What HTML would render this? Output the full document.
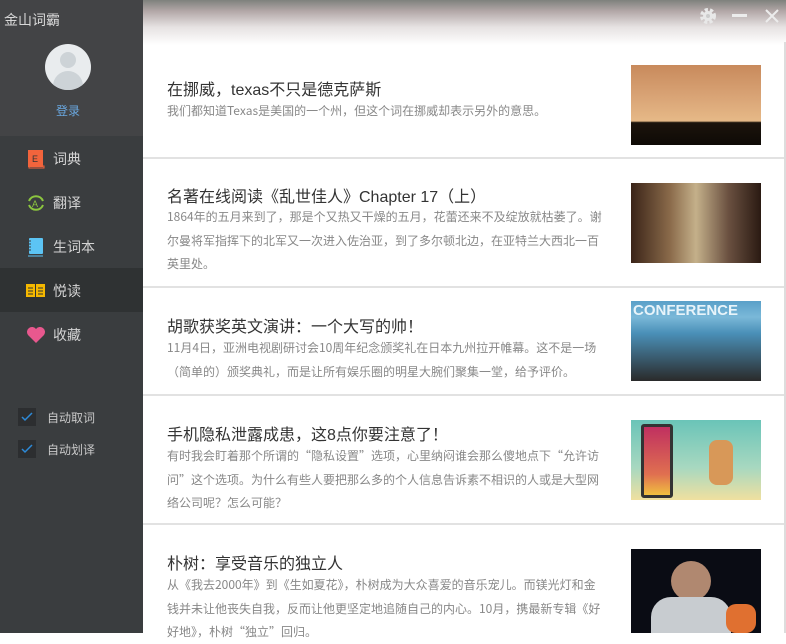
<!DOCTYPE html>
<html><head><meta charset="utf-8">
<style>
*{margin:0;padding:0;box-sizing:border-box}
body{width:786px;height:633px;overflow:hidden;background:#fff;font-family:"Liberation Sans","Noto Sans CJK SC",sans-serif;position:relative}
#side{position:absolute;left:0;top:0;width:143px;height:633px;background:#3a3d3f}
#sidetop{position:absolute;left:0;top:0;width:143px;height:136px;background:#434446}
.logo{position:absolute;left:4px;top:10px;color:#d8d8d8;font-size:14px}
.avatar{position:absolute;left:45px;top:44px;width:46px;height:46px;border-radius:50%;background:#e9ecee;overflow:hidden}
.login{position:absolute;left:56px;top:102px;color:#6aa8e0;font-size:12px}
.menu{position:absolute;left:0;width:143px;height:44px;color:#d4d4d4;font-size:14px}
.menu span{position:absolute;left:53px;top:13px}
.menu svg{position:absolute;left:26px;top:13px}
.active{background:#2f3233}
.chk{position:absolute;left:18px;width:18px;height:18px;background:#2c2e30}
.chk svg{position:absolute;left:3px;top:4px}
.chklbl{position:absolute;left:47px;color:#c8c8c8;font-size:12px}
#topbar{position:absolute;left:143px;top:0;width:643px;height:45px;background:linear-gradient(#7e817c 0%,#b3a8a8 25%,#e6e2e2 60%,#fff 100%)}
#rb{position:absolute;left:784px;top:42px;width:2px;height:591px;background:#ddd}
.item{position:absolute;left:143px;width:641px}
.t{position:absolute;left:24px;font-size:16px;color:#333}
.d{position:absolute;left:24px;width:436px;font-size:12px;color:#888;line-height:23.5px;font-family:"Noto Sans CJK SC","Liberation Sans",sans-serif}
.img{position:absolute;left:488px;width:130px;height:80px}
.hr{position:absolute;left:143px;width:641px;height:2px;background:#e2e2e2}
</style></head><body>
<div id="side">
<div id="sidetop"></div>
<div class="logo">金山词霸</div>
<div class="avatar"><div style="position:absolute;left:15px;top:8px;width:16px;height:16px;border-radius:50%;background:#cdd3d7"></div><div style="position:absolute;left:8px;top:27px;width:30px;height:24px;border-radius:15px 15px 0 0;background:#cdd3d7"></div></div>
<div class="login">登录</div>
<div class="menu" style="top:136px"><svg width="20" height="20"><rect x="2" y="1" width="15" height="17" fill="#f2643c"/><rect x="3" y="17" width="15" height="2" fill="none" stroke="#f2643c"/><text x="6" y="13" font-size="9" fill="#333" font-family="Liberation Sans">E</text></svg><span>词典</span></div>
<div class="menu" style="top:180px"><svg width="20" height="20"><path d="M3 8 A7.5 7.5 0 0 1 17 8 M17 12 A7.5 7.5 0 0 1 3 12" stroke="#8cc63f" stroke-width="2" fill="none"/><text x="6" y="14" font-size="9" fill="#8cc63f" font-family="Liberation Sans">A</text></svg><span>翻译</span></div>
<div class="menu" style="top:224px"><svg width="20" height="20"><rect x="3" y="1" width="14" height="16" rx="1" fill="#5cc4f4"/><path d="M2 4h3M2 7h3M2 10h3M2 13h3" stroke="#3a3d3f"/><path d="M2 19h15" stroke="#5cc4f4"/></svg><span>生词本</span></div>
<div class="menu active" style="top:268px"><svg width="22" height="20"><rect x="0" y="3" width="9" height="13" fill="#f5b800"/><rect x="10" y="3" width="9" height="13" fill="#f5b800"/><path d="M2 7h5M2 10h5M2 13h5M12 7h5M12 10h5M12 13h5" stroke="#2f3233"/></svg><span>悦读</span></div>
<div class="menu" style="top:312px"><svg width="20" height="20"><path d="M10 18 L2 10 A4.5 4.5 0 0 1 10 4 A4.5 4.5 0 0 1 18 10 Z" fill="#e8588e"/></svg><span>收藏</span></div>
<div class="chk" style="top:408px"><svg width="12" height="10"><path d="M1 5l3 3 7-7" stroke="#2d8ad8" stroke-width="1.5" fill="none"/></svg></div>
<div class="chklbl" style="top:409px">自动取词</div>
<div class="chk" style="top:440px"><svg width="12" height="10"><path d="M1 5l3 3 7-7" stroke="#2d8ad8" stroke-width="1.5" fill="none"/></svg></div>
<div class="chklbl" style="top:441px">自动划译</div>
</div>
<div id="topbar">
<svg style="position:absolute;left:556px;top:7px" width="18" height="18"><circle cx="9" cy="9" r="6" fill="none" stroke="#e8e8e8" stroke-width="4" stroke-dasharray="3 2"/><circle cx="9" cy="9" r="5" fill="#e8e8e8"/><circle cx="9" cy="9" r="2" fill="#ccc"/></svg>
<div style="position:absolute;left:589px;top:14px;width:15px;height:3px;background:#ececec"></div>
<svg style="position:absolute;left:621px;top:8px" width="16" height="16"><path d="M2 2L14 14M14 2L2 14" stroke="#ececec" stroke-width="2"/></svg>
</div>
<div id="rb"></div>

<div class="item" style="top:0"><div class="t" style="top:76px">在挪威，texas不只是德克萨斯</div><div class="d" style="top:99px">我们都知道Texas是美国的一个州，但这个词在挪威却表示另外的意思。</div>
<div class="img" style="top:65px;background:linear-gradient(#c88a5c 0%,#d9a476 40%,#e6b987 70%,#1c140c 72%,#0e0a06 100%)"></div></div>
<div class="hr" style="top:157px"></div>

<div class="item" style="top:0"><div class="t" style="top:183px">名著在线阅读《乱世佳人》Chapter 17（上）</div><div class="d" style="top:205px">1864年的五月来到了，那是个又热又干燥的五月，花蕾还来不及绽放就枯萎了。谢尔曼将军指挥下的北军又一次进入佐治亚，到了多尔顿北边，在亚特兰大西北一百英里处。</div>
<div class="img" style="top:183px;background:linear-gradient(90deg,#3a2418,#8a6a4a 30%,#c4b08a 50%,#6a5040 75%,#2a1a12)"></div></div>
<div class="hr" style="top:286px"></div>

<div class="item" style="top:0"><div class="t" style="top:313px">胡歌获奖英文演讲：一个大写的帅！</div><div class="d" style="top:336px">11月4日，亚洲电视剧研讨会10周年纪念颁奖礼在日本九州拉开帷幕。这不是一场（简单的）颁奖典礼，而是让所有娱乐圈的明星大腕们聚集一堂，给予评价。</div>
<div class="img" style="top:301px;background:linear-gradient(#5aa0c8 0%,#7ab8d8 20%,#4a90b8 40%,#2a2a2a 100%)"><div style="color:#e8f4fa;font-weight:bold;font-size:15px;padding:1px 0 0 2px;letter-spacing:0">CONFERENCE</div></div></div>
<div class="hr" style="top:394px"></div>

<div class="item" style="top:0"><div class="t" style="top:421px">手机隐私泄露成患，这8点你要注意了！</div><div class="d" style="top:444px">有时我会盯着那个所谓的“隐私设置”选项，心里纳闷谁会那么傻地点下“允许访问”这个选项。为什么有些人要把那么多的个人信息告诉素不相识的人或是大型网络公司呢？怎么可能？</div>
<div class="img" style="top:420px;background:linear-gradient(#6ac4b8 0%,#a8d8c0 60%,#f0e0a0 100%)"><div style="position:absolute;left:10px;top:4px;width:32px;height:74px;background:linear-gradient(#c03060,#e07050 70%,#f0c040);border:3px solid #333;border-radius:3px"></div><div style="position:absolute;left:78px;top:20px;width:24px;height:45px;background:#d89858;border-radius:8px"></div></div></div>
<div class="hr" style="top:523px"></div>

<div class="item" style="top:0"><div class="t" style="top:550px">朴树：享受音乐的独立人</div><div class="d" style="top:573px">从《我去2000年》到《生如夏花》，朴树成为大众喜爱的音乐宠儿。而镁光灯和金钱并未让他丧失自我，反而让他更坚定地追随自己的内心。10月，携最新专辑《好好地》，朴树“独立”回归。</div>
<div class="img" style="top:549px;height:84px;background:#0a0c14"><div style="position:absolute;left:40px;top:12px;width:40px;height:40px;border-radius:50%;background:#b08870"></div><div style="position:absolute;left:20px;top:48px;width:80px;height:36px;background:#c8ccd0;border-radius:20px 20px 0 0"></div><div style="position:absolute;left:95px;top:55px;width:30px;height:29px;background:#e07030;border-radius:10px"></div></div></div>
</body></html>
